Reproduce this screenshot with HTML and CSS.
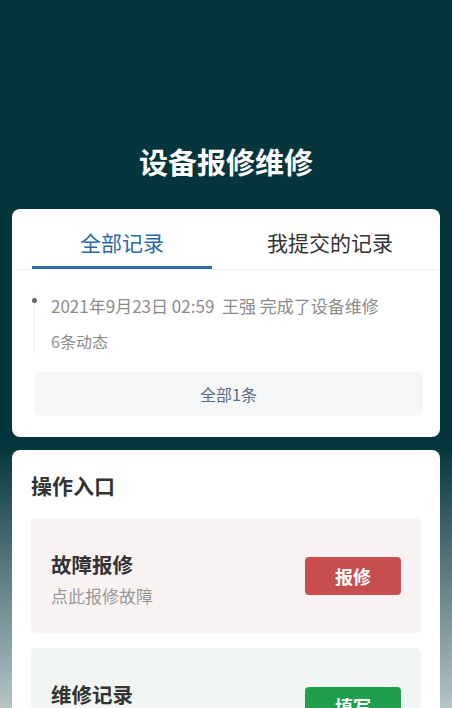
FILE: index.html
```html
<!DOCTYPE html>
<html lang="zh-CN">
<head>
<meta charset="utf-8">
<title>设备报修维修</title>
<link rel="stylesheet" href="styles.css">
</head>
<body>
<div class="page">
  <header class="header">
    <h1 class="title">设备报修维修</h1>
  </header>

  <section class="card records">
    <div class="tabs">
      <div class="tab active">全部记录</div>
      <div class="tab">我提交的记录</div>
    </div>
    <div class="records-body">
      <div class="timeline">
        <div class="tl-item">
          <span class="tl-dot"></span>
          <div class="tl-text">2021年9月23日 02:59&nbsp;&nbsp;王强 完成了设备维修</div>
          <div class="tl-sub">6条动态</div>
        </div>
      </div>
      <div class="all-btn">全部1条</div>
    </div>
  </section>

  <section class="card actions">
    <h2 class="section-title">操作入口</h2>
    <div class="action action-red">
      <div class="action-text">
        <div class="action-title">故障报修</div>
        <div class="action-sub">点此报修故障</div>
      </div>
      <div class="action-btn btn-red">报修</div>
    </div>
    <div class="action action-green">
      <div class="action-text">
        <div class="action-title">维修记录</div>
        <div class="action-sub">查看维修记录</div>
      </div>
      <div class="action-btn btn-green">填写</div>
    </div>
  </section>
</div>
</body>
</html>
```

FILE: styles.css
```css
html, body {
  margin: 0;
  padding: 0;
}
body {
  font-family: "Noto Sans CJK SC", "Noto Sans", sans-serif;
  background: linear-gradient(to bottom, #04353d 0px, #04353d 445px, #b6c5c7 708px, #e6ecec 900px);
  min-height: 708px;
  overflow: hidden;
}
.page {
  padding: 0 12px 20px;
}
.header {
  padding-top: 141px;
  padding-bottom: 28px;
}
.title {
  margin: 0;
  text-align: center;
  color: #fff;
  font-size: 29px;
  line-height: 40px;
  font-weight: 700;
}
.card {
  background: #fff;
  border-radius: 8px;
}
.tabs {
  display: flex;
  justify-content: space-between;
  padding: 0 20px;
  border-bottom: 1px solid #eeeeee;
}
.tab {
  width: 180px;
  text-align: center;
  font-size: 21px;
  line-height: 28px;
  padding: 19px 0 10px;
  color: #333;
  border-bottom: 3px solid transparent;
}
.tab.active {
  color: #2b6aa8;
  border-bottom-color: #2d6ca7;
}
.records-body {
  padding: 24px 17px 21px 22px;
}
.timeline {
  margin-bottom: 19px;
}
.tl-item {
  position: relative;
  padding-left: 16px;
  border-left: 1px solid #ececec;
}
.tl-dot {
  position: absolute;
  left: -3px;
  top: 4px;
  width: 5px;
  height: 5px;
  border-radius: 50%;
  background: #666;
}
.tl-text {
  font-size: 17px;
  line-height: 24px;
  color: #8c8c8c;
}
.tl-sub {
  margin-top: 11px;
  font-size: 16px;
  line-height: 24px;
  color: #8c8c8c;
}
.all-btn {
  height: 44px;
  line-height: 44px;
  text-align: center;
  background: #f5f6f8;
  border-radius: 5px;
  color: #5b6a85;
  font-size: 16px;
}
.actions {
  margin-top: 13px;
  padding: 20px 19px 20px;
}
.section-title {
  margin: 0 0 18px;
  font-size: 21px;
  line-height: 30px;
  color: #333;
  font-weight: 700;
}
.action {
  display: flex;
  align-items: center;
  justify-content: space-between;
  height: 115px;
  padding: 0 20px;
  border-radius: 5px;
  margin-bottom: 15px;
}
.action-red { background: #f9f4f3; }
.action-green { background: #f1f6f3; }
.action-text {
  padding-top: 8px;
}
.action-title {
  font-size: 20.5px;
  line-height: 26px;
  font-weight: 700;
  color: #333;
}
.action-sub {
  margin-top: 6px;
  font-size: 17px;
  line-height: 26px;
  color: #999;
}
.action-btn {
  width: 96px;
  height: 38px;
  line-height: 38px;
  text-align: center;
  color: #fff;
  font-size: 18px;
  font-weight: 700;
  border-radius: 4px;
}
.btn-red { background: #c84d4d; }
.btn-green { background: #1f9f4e; }
```
